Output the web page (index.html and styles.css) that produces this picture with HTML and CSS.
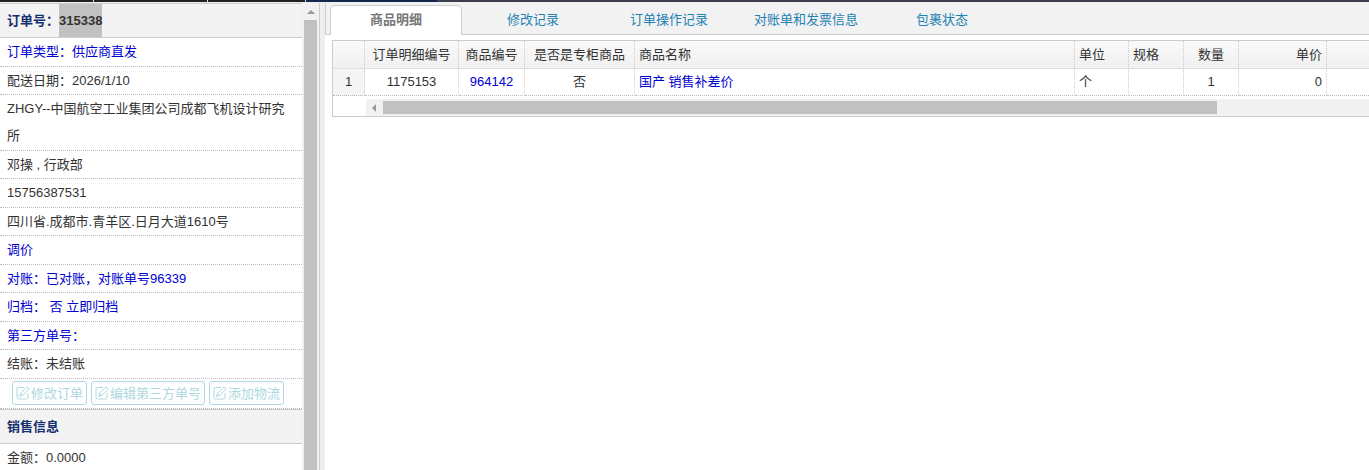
FILE: index.html
```html
<!DOCTYPE html>
<html lang="zh-CN">
<head>
<meta charset="utf-8">
<title>订单 315338</title>
<link rel="stylesheet" href="styles.css">
</head>
<body>
<svg class="symbols" aria-hidden="true">
  <symbol id="edit" viewBox="0 0 14 14">
    <path d="M8 1.500H2.500a1.500 1.500 0 0 0-1.500 1.500V11.500A1.500 1.500 0 0 0 2.500 13H10.500a1.500 1.500 0 0 0 1.500-1.500V7" fill="none" stroke="currentColor"/>
    <path d="M3.500 10.500L4.500 7.300L11 .8L13.200 3L6.700 9.500ZM4.500 7.300L6.700 9.500" fill="none" stroke="currentColor" stroke-linejoin="round"/>
  </symbol>
</svg>
<div class="topbar"><i class="seg seg-a"></i><i class="seg seg-b"></i><i class="seg seg-c"></i><i class="seg seg-d"></i><i class="seg seg-rest"></i></div>
<div class="layout">
  <aside class="sidebar">
    <div class="info">
      <h2 class="heading">订单号：<mark class="order-no">315338</mark></h2>
      <div class="row"><a class="link" href="#">订单类型：供应商直发</a></div>
      <div class="row">配送日期：2026/1/10</div>
      <div class="row">ZHGY--中国航空工业集团公司成都飞机设计研究所</div>
      <div class="row">邓操 , 行政部</div>
      <div class="row">15756387531</div>
      <div class="row">四川省.成都市.青羊区.日月大道1610号</div>
      <div class="row"><a class="link" href="#">调价</a></div>
      <div class="row"><a class="link" href="#">对账：已对账，对账单号96339</a></div>
      <div class="row"><a class="link" href="#">归档： 否 立即归档</a></div>
      <div class="row"><a class="link" href="#">第三方单号：</a></div>
      <div class="row">结账：未结账</div>
      <div class="actions">
        <button class="btn" type="button"><svg class="icon"><use href="#edit"/></svg>修改订单</button>
        <button class="btn" type="button"><svg class="icon"><use href="#edit"/></svg>编辑第三方单号</button>
        <button class="btn" type="button"><svg class="icon"><use href="#edit"/></svg>添加物流</button>
      </div>
      <h2 class="heading">销售信息</h2>
      <div class="row">金额：0.0000</div>
    </div>
    <div class="vscroll"><svg class="arrow-up" viewBox="0 0 8 4"><path d="M0 4L4 0L8 4Z"/></svg><div class="vthumb"></div></div>
  </aside>
  <div class="splitter"></div>
  <main class="main">
    <nav class="tabs">
      <a class="tab active" href="#">商品明细</a>
      <a class="tab" href="#">修改记录</a>
      <a class="tab" href="#">订单操作记录</a>
      <a class="tab" href="#">对账单和发票信息</a>
      <a class="tab" href="#">包裹状态</a>
    </nav>
    <div class="panel">
      <table class="grid">
        <colgroup><col class="w-num"><col class="w-detail"><col class="w-code"><col class="w-counter"><col class="w-name"><col class="w-unit"><col class="w-spec"><col class="w-spec"><col class="w-price"><col></colgroup>
        <thead><tr><th></th><th>订单明细编号</th><th>商品编号</th><th>是否是专柜商品</th><th class="left">商品名称</th><th class="left">单位</th><th class="left">规格</th><th>数量</th><th class="right">单价</th><th></th></tr></thead>
        <tbody><tr><td class="num">1</td><td>1175153</td><td><a class="link" href="#">964142</a></td><td>否</td><td class="left"><a class="link" href="#">国产 销售补差价</a></td><td class="left">个</td><td></td><td>1</td><td class="right">0</td><td></td></tr></tbody>
      </table>
      <div class="hscroll"><svg class="arrow-left" viewBox="0 0 4 8"><path d="M4 0L0 4L4 8Z"/></svg><div class="hthumb"></div><div class="htrack"></div></div>
    </div>
  </main>
</div>
</body>
</html>
```
FILE: styles.css
```css
* { box-sizing: border-box; }
body {
  margin: 0;
  height: 100vh;
  overflow: hidden;
  display: flex;
  flex-direction: column;
  background: #fff;
  color: #333;
  font: 13px/27px "Liberation Sans", "Noto Sans CJK SC", sans-serif;
}
a { text-decoration: none; }
.symbols { display: none; }

.topbar { flex: none; display: flex; height: 2px; background: #3a3f4b; }
.seg { background: #222; border-right: 1px solid #ddd; }
.seg-a { width: 94px; }
.seg-b { width: 114px; }
.seg-c { width: 98px; }
.seg-d { width: 131px; background: #14264d; border: 0; }
.seg-rest { flex: 1; background: #3a3f4b; border: 0; }

.layout { flex: 1; min-height: 0; display: flex; padding-top: 1px; background: #eee; }
.sidebar { flex: none; width: 318px; display: flex; overflow: hidden; background: #fff; }
.info { flex: 1; overflow: hidden; }
.heading {
  margin: 0;
  height: 35px;
  padding-left: 7px;
  border-top: 1px solid #ccc;
  border-bottom: 1px solid #ccc;
  background: #f3f3f3;
  color: #15306e;
  font-size: 13px;
  line-height: 33px;
}
.order-no { display: inline-block; background: #c1c1c1; color: #333; }
.row { padding: 0 16px 0 7px; border-bottom: 1px dotted #bbb; }
.row:nth-child(even) { padding-bottom: 1px; }
.link { color: #0000d0; }
.actions {
  display: flex;
  gap: 4px;
  padding: 2px 0 3px 12px;
  border-bottom: 1px dotted #bbb;
}
.btn {
  display: flex;
  align-items: center;
  gap: 1px;
  height: 24px;
  padding: 0 3px;
  border: 1px solid #add8e0;
  border-radius: 3px;
  background: #fff;
  color: #add8e0;
  font: inherit;
}
.icon { width: 14px; height: 14px; }
.vscroll {
  width: 16px;
  display: flex;
  flex-direction: column;
  align-items: center;
  padding: 7px 1px 0 2px;
  background: #f1f1f1;
}
.arrow-up { flex: none; width: 8px; height: 4px; margin-bottom: 6px; fill: #999; }
.vthumb { flex: 1; width: 13px; background: #c1c1c1; }
.splitter {
  flex: none;
  width: 7px;
  background: linear-gradient(90deg, #f1f1f1 1px, #ccc 1px, #ccc 2px, #eee 2px);
}

.main { flex: 1; min-width: 0; background: #fff; }
.tabs {
  display: flex;
  gap: 4px;
  height: 32px;
  padding: 2px 0 0 4px;
  border: solid #ccc;
  border-width: 0 0 1px 1px;
  background: #f2f2f2;
}
.tab { width: 132px; height: 29px; line-height: 29px; text-align: center; color: #1e82b4; }
.tab:nth-child(odd) { margin-right: 1px; }
.tab.active {
  height: 30px;
  line-height: 27px;
  border: 1px solid #ccc;
  border-bottom: 0;
  border-radius: 5px 5px 0 0;
  background: #fff;
  color: #777;
  font-weight: bold;
}
.panel { margin: 5px 0 0 7px; border: 1px solid #ccc; border-right: 0; }
.grid { width: 100%; table-layout: fixed; border-collapse: separate; border-spacing: 0; }
.grid th, .grid td {
  padding: 0 4px;
  border-right: 1px dotted #ccc;
  border-bottom: 1px dotted #bbb;
  font-weight: normal;
  text-align: center;
  line-height: 26px;
  white-space: nowrap;
}
.grid th { background: linear-gradient(#fafafa, #f0f0f0); border-bottom: 1px solid #ddd; line-height: 27px; }
.grid .left { text-align: left; }
.grid .right { text-align: right; }
.grid .num { background: #f5f5f5; }
.grid tr > :last-child { border-right: 0; }
.w-num { width: 32px; }
.w-detail { width: 94px; }
.w-code { width: 66px; }
.w-counter { width: 110px; }
.w-name { width: 440px; }
.w-unit { width: 54px; }
.w-spec { width: 55px; }
.w-price { width: 88px; }
.hscroll {
  display: flex;
  align-items: center;
  height: 17px;
  margin: 3px 0 0 33px;
  padding-left: 6px;
  background: #f1f1f1;
}
.arrow-left { width: 4px; height: 8px; margin-right: 7px; fill: #999; }
.hthumb { flex: 11; height: 13px; background: #c1c1c1; }
.htrack { flex: 2; }
```
